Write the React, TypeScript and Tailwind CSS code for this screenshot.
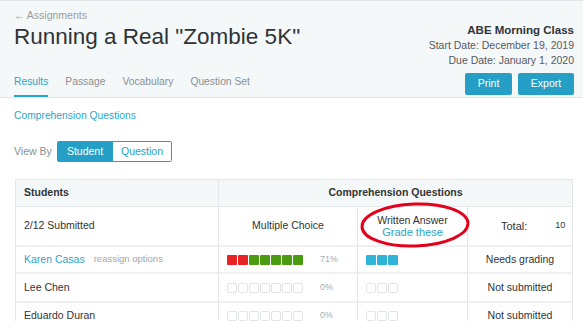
import React from "react";

const BLUE = "text-[#2aa6c9]";

function Squares({ colors, empty = 0 }: { colors: string[]; empty?: number }) {
  return (
    <div className="flex gap-px">
      {colors.map((c, i) => (
        <div key={i} className={`w-[10px] h-[10px] rounded-[1px] ${c}`}></div>
      ))}
      {Array.from({ length: empty }).map((_, i) => (
        <div key={"e" + i} className="w-[10px] h-[10px] rounded-[2px] border border-[#e2e5e7] bg-white"></div>
      ))}
    </div>
  );
}

const rows = [
  {
    name: "Karen Casas",
    link: true,
    mc: ["bg-[#e82323]", "bg-[#e82323]", "bg-[#4a9a12]", "bg-[#4a9a12]", "bg-[#4a9a12]", "bg-[#4a9a12]", "bg-[#4a9a12]"],
    pct: "71%",
    wa: ["bg-[#2db4d8]", "bg-[#2db4d8]", "bg-[#2db4d8]"],
    status: "Needs grading",
    h: "h-[27px]",
  },
  { name: "Lee Chen", link: false, mc: [], pct: "0%", wa: [], status: "Not submitted", h: "h-[29px]" },
  { name: "Eduardo Duran", link: false, mc: [], pct: "0%", wa: [], status: "Not submitted", h: "h-[28px]" },
];

export default function App() {
  return (
    <div className="relative w-[583px] h-[321px] overflow-hidden bg-white font-['Liberation_Sans',Arial,sans-serif] text-[#333]">
      {/* Header */}
      <div className="h-[98px] bg-[#f5f8f9] border-t border-[#3b9fc6] border-b border-[#e2e6e9] flex justify-between pl-[14px] pr-[9px]">
        <div className="flex flex-col">
          <div className="pt-[7px] text-[10.5px] leading-[14px] text-[#9a9ea2]">← Assignments</div>
          <div className="mt-[1px] text-[22.5px] leading-[28px] text-[#2e3338]">Running a Real "Zombie 5K"</div>
          <div className="mt-auto flex gap-[17px] text-[10.3px] leading-[14px] text-[#8a8f94]">
            <div className={`pb-[6px] border-b-2 border-[#2aa6c9] ${BLUE}`}>Results</div>
            <div className="pb-[6px]">Passage</div>
            <div className="pb-[6px]">Vocabulary</div>
            <div className="pb-[6px]">Question Set</div>
          </div>
        </div>
        <div className="flex flex-col items-end pt-[22px]">
          <div className="text-[11.5px] leading-[15px] font-bold text-[#2e3338]">ABE Morning Class</div>
          <div className="text-[10.5px] leading-[15px] text-[#555a5e]">Start Date: December 19, 2019</div>
          <div className="text-[10.5px] leading-[15px] text-[#555a5e]">Due Date: January 1, 2020</div>
          <div className="mt-[5px] flex gap-[6px]">
            <div className="w-[47px] h-[22px] rounded-[2px] bg-[#259fc5] text-white text-[10.5px] flex items-center justify-center">Print</div>
            <div className="w-[56px] h-[22px] rounded-[2px] bg-[#259fc5] text-white text-[10.5px] flex items-center justify-center">Export</div>
          </div>
        </div>
      </div>

      {/* Content */}
      <div className="pl-[14px]">
        <div className={`mt-[11px] text-[10.3px] leading-[14px] ${BLUE}`}>Comprehension Questions</div>
        <div className="mt-[18px] flex items-center">
          <div className="w-[43px] text-[10.5px] text-[#8a8f94]">View By</div>
          <div className="flex h-[21px] text-[10.5px]">
            <div className="w-[56px] flex items-center justify-center bg-[#259fc5] text-white rounded-l-[2px]">Student</div>
            <div className="w-[59px] flex items-center justify-center border border-[#259fc5] border-l-0 rounded-r-[2px] text-[#259fc5]">Question</div>
          </div>
        </div>

        {/* Table */}
        <div className="mt-[17px] ml-px w-[558px] border border-[#e4e7e9] grid grid-cols-[203px_139px_110px_1fr] text-[10.5px]">
          <div className="h-[27px] bg-[#f5f8f9] border-r border-[#e4e7e9] border-b border-b-[#e4e7e9] flex items-center pl-[8px] font-bold">Students</div>
          <div className="col-span-3 h-[27px] bg-[#f5f8f9] border-b border-[#e4e7e9] flex items-center justify-center font-bold">Comprehension Questions</div>

          <div className="h-[40px] border-r border-[#e4e7e9] border-b-2 border-b-[#eef0f2] flex items-center pl-[8px]">2/12 Submitted</div>
          <div className="h-[40px] border-r border-[#e4e7e9] border-b-2 border-b-[#eef0f2] flex items-center justify-center">Multiple Choice</div>
          <div className="h-[40px] border-r border-[#e4e7e9] border-b-2 border-b-[#eef0f2] flex flex-col items-center justify-center leading-[12px]">
            <div>Written Answer</div>
            <div className={`${BLUE} text-[11px]`}>Grade these</div>
          </div>
          <div className="h-[40px] border-b-2 border-b-[#eef0f2] flex items-center pl-[33px] text-[11px]">
            <span>Total:</span>
            <span className="ml-[28px] text-[9px]">10</span>
          </div>

          {rows.map((r) => (
            <React.Fragment key={r.name}>
              <div className={`${r.h} border-r border-[#e4e7e9] border-b-2 border-b-[#eef0f2] flex items-center pl-[8px]`}>
                <span className={r.link ? BLUE : ""}>{r.name}</span>
                {r.link && <span className="ml-[9px] text-[9.5px] text-[#a3a7ab]">reassign options</span>}
              </div>
              <div className={`${r.h} border-r border-[#e4e7e9] border-b-2 border-b-[#eef0f2] flex items-center pl-[8px]`}>
                <Squares colors={r.mc} empty={7 - r.mc.length} />
                <span className="ml-[17px] text-[9px] text-[#a8acb0]">{r.pct}</span>
              </div>
              <div className={`${r.h} border-r border-[#e4e7e9] border-b-2 border-b-[#eef0f2] flex items-center pl-[8px]`}>
                <Squares colors={r.wa} empty={3 - r.wa.length} />
              </div>
              <div className={`${r.h} border-b-2 border-b-[#eef0f2] flex items-center justify-center`}>{r.status}</div>
            </React.Fragment>
          ))}
        </div>
      </div>

      {/* Annotation circle */}
      <svg className="absolute left-0 top-0 pointer-events-none" width="583" height="321">
        <ellipse cx="415" cy="225" rx="53" ry="21" fill="none" stroke="#e3001b" strokeWidth="3" transform="rotate(-2 415 225)" />
      </svg>
    </div>
  );
}
